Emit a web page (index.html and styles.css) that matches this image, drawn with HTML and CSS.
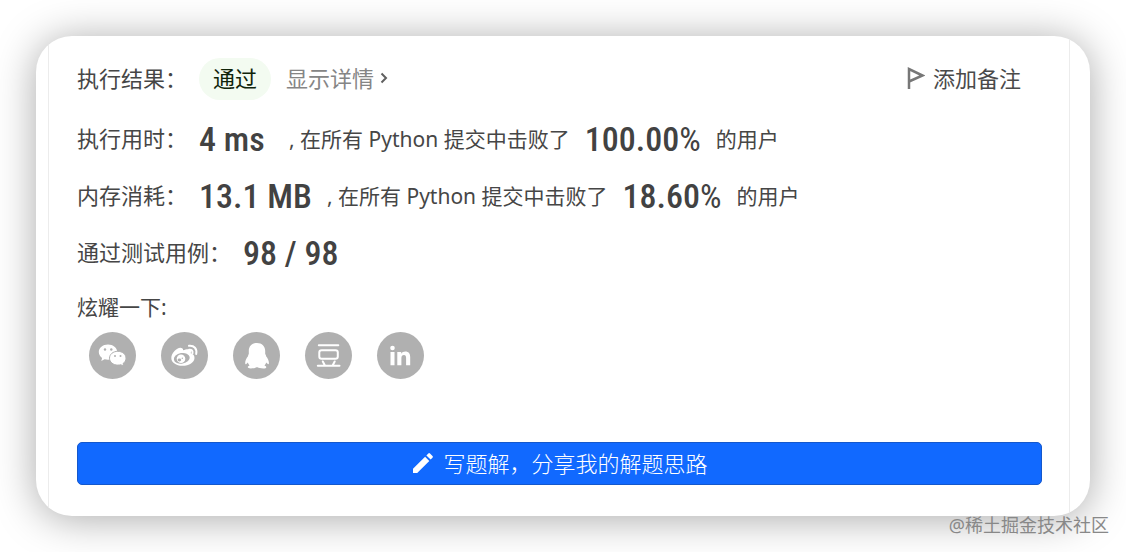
FILE: index.html
```html
<!DOCTYPE html>
<html lang="zh-CN">
<head>
<meta charset="utf-8">
<title>执行结果</title>
<link rel="stylesheet" href="styles.css">
</head>
<body>
<main class="card">
  <div class="panel">
    <header class="row row-head">
      <span class="label">执行结果：</span>
      <span class="status">通过</span>
      <a class="details" href="#details">显示详情
        <svg class="chevron" viewBox="0 0 8 12" aria-hidden="true"><path d="M1.5 1.5 6 6 1.5 10.5"/></svg>
      </a>
      <button class="note" type="button">
        <svg class="flag" viewBox="0 0 18 24" aria-hidden="true"><path d="M2 23V3L15.500 9.500 2 15.500"/></svg>
        添加备注
      </button>
    </header>
    <div class="row">
      <span class="label">执行用时：</span>
      <strong class="value">4 ms</strong>
      <span class="text">, 在所有 Python 提交中击败了</span>
      <strong class="value">100.00<span class="percent">%</span></strong>
      <span class="text">的用户</span>
    </div>
    <div class="row">
      <span class="label">内存消耗：</span>
      <strong class="value">13.1 MB</strong>
      <span class="text">, 在所有 Python 提交中击败了</span>
      <strong class="value">18.60<span class="percent">%</span></strong>
      <span class="text">的用户</span>
    </div>
    <div class="row">
      <span class="label">通过测试用例：</span>
      <strong class="value">98 / 98</strong>
    </div>
    <div class="share">
      <span class="share-title">炫耀一下:</span>
      <div class="icons">
        <a class="social" href="#wechat" aria-label="微信">
          <svg viewBox="0 0 47 47" aria-hidden="true">
            <path class="fill" d="M19 12.500c-5.200 0-9.200 3.300-9.200 7.500 0 2.400 1.300 4.500 3.300 5.900l-.8 3 3.300-1.700c1.100.3 2.200.5 3.400.5 5.100 0 9.200-3.400 9.200-7.700s-4.100-7.500-9.200-7.500Z"/>
            <path class="fill cut" d="M28.800 19.300c-4.700 0-8.300 3-8.300 6.900 0 3.800 3.600 6.900 8.300 6.900 1.100 0 2-.2 3-.4l3 1.600-.8-2.700c1.900-1.300 3-3.200 3-5.400 0-3.900-3.600-6.900-8.200-6.900Z"/>
            <g class="hole"><circle cx="16" cy="17.500" r="1.200"/><circle cx="22.300" cy="17.500" r="1.200"/><circle cx="26" cy="24" r="1"/><circle cx="31.500" cy="24" r="1"/></g>
          </svg>
        </a>
        <a class="social" href="#weibo" aria-label="微博">
          <svg viewBox="0 0 47 47" aria-hidden="true">
            <path class="fill" d="M21.500 16.500c-2-2-5.600-.2-8 2.600-2.200 2.500-3.200 4.700-3.200 6.900 0 4.600 5 7.800 11 7.800 7 0 12.200-3.700 12.200-7.900 0-2.600-1.700-4-3.800-4.600.7-2.300.4-3.300-.8-3.800-1.800-.8-4.300-.2-7 .8.300-.8.300-1.300-.4-1.800Z"/>
            <ellipse class="hole" cx="20.800" cy="26.300" rx="8" ry="5.300" transform="rotate(-10 20.800 26.300)"/>
            <circle class="fill" cx="20" cy="26.800" r="4.300"/>
            <ellipse class="hole" cx="18.400" cy="28" rx="1.800" ry="1.400"/><circle class="hole" cx="21.300" cy="26.300" r=".7"/>
            <path class="wave" d="M28 13.800c5.200-.5 8.300 3 7.200 8.200M28.200 17.700c2.500-.2 3.700 1.200 3.300 3.500"/>
          </svg>
        </a>
        <a class="social" href="#qq" aria-label="QQ">
          <svg viewBox="0 0 47 47" aria-hidden="true">
            <path class="fill" d="M24 11c-5 0-8.200 3.300-8.200 8v3c-.4.600-.8 1.400-.8 2.300-1.700 2.200-3 5-2.800 7 .1 1.600.8 1.400 2.600-.7.3 1.200 1 2.100 1.700 2.900-3 1.300-1.800 2.900 1.300 2.900 2.800 0 4.500-.5 5.700-1.200h1c1.200.7 3 1.200 5.800 1.200 3.200 0 4.200-1.600 1.200-2.900.8-.8 1.500-1.700 1.800-2.900 1.800 2.100 2.500 2.200 2.600.7.200-2-1.100-4.800-2.800-7 0-.9-.4-1.700-.9-2.300v-3c0-4.700-3.200-8-8.200-8Z"/>
          </svg>
        </a>
        <a class="social" href="#douban" aria-label="豆瓣">
          <svg viewBox="0 0 47 47" aria-hidden="true">
            <path class="stroke" d="M13.800 13.200h19.500M12.800 33.800h21.700M17.800 29.500l2 3.800M29.700 29.500l-2 3.800"/>
            <rect class="stroke" x="14.300" y="18.300" width="18.500" height="8.400" rx="2.300"/>
          </svg>
        </a>
        <a class="social" href="#linkedin" aria-label="LinkedIn">
          <svg viewBox="0 0 47 47" aria-hidden="true">
            <circle class="fill" cx="15.500" cy="16" r="2.300"/>
            <path class="fill" d="M13.500 20h4v13.200h-4zM20.300 20h3.900v1.700c.9-1.300 2.300-2.100 4.100-2.100 3.300 0 4.900 2.100 4.900 5.700v7.900h-4.100v-7.100c0-2-.6-3-2.100-3-1.700 0-2.600 1.100-2.600 3v7.100h-4.100z"/>
          </svg>
        </a>
      </div>
    </div>
    <button class="write" type="button">
      <svg class="pencil" viewBox="0 0 24 24" aria-hidden="true"><path d="M2 17.800V22h4.200L18.300 9.900l-4.200-4.200ZM21.500 6.700a1.200 1.200 0 0 0 0-1.700L19 2.500a1.200 1.200 0 0 0-1.700 0l-1.900 1.900 4.200 4.200Z"/></svg>
      写题解，分享我的解题思路
    </button>
  </div>
</main>
<div class="watermark">@稀土掘金技术社区</div>
</body>
</html>
```
FILE: styles.css
```css
* {
  box-sizing: border-box;
}

body {
  margin: 0;
  padding: 36px;
  background: #fff;
  color: #464646;
  font-family: "Noto Sans", "Noto Sans CJK SC", sans-serif;
  font-size: 21px;
  font-weight: 400;
  line-height: 32px;
}

button {
  font: inherit;
  cursor: pointer;
}

a {
  color: inherit;
  text-decoration: none;
}

.card {
  padding: 0 20px 0 12px;
  border-radius: 36px;
  overflow: hidden;
  background: #fff;
  box-shadow: 0 3px 42px rgba(0, 0, 0, 0.34);
}

.panel {
  padding: 21px 27px 31px 28px;
  border: solid #ececec;
  border-width: 0 1px;
}

.row {
  display: flex;
  align-items: center;
  gap: 15px;
  height: 57px;
  white-space: nowrap;
}

.row-head {
  height: 43px;
  margin-bottom: 10px;
}

.label,
.status,
.details,
.note {
  font-size: 22px;
  line-height: 30px;
  padding-bottom: 2px;
}

.label {
  margin-right: -3px;
}

.status {
  padding: 5px 14px 7px;
  border-radius: 22px;
  background: #f3fbf1;
  color: #10240a;
}

.details {
  display: flex;
  align-items: center;
  gap: 6px;
  color: #858585;
}

.chevron {
  width: 8px;
  height: 12px;
  fill: none;
  stroke: #606060;
  stroke-width: 2;
}

.note {
  display: flex;
  align-items: center;
  gap: 8px;
  margin-left: auto;
  padding: 0 21px 2px 0;
  border: 0;
  background: none;
  color: #4a4a4a;
}

.flag {
  width: 18px;
  height: 24px;
  fill: none;
  stroke: #777;
  stroke-width: 2.5;
}

.value {
  min-width: 75px;
  color: #424242;
  font-family: "Roboto Condensed", Roboto, sans-serif;
  font-size: 34px;
  font-weight: 500;
}

.percent {
  font-weight: 400;
}

.share-title {
  display: block;
  margin-top: 10px;
}

.icons {
  display: flex;
  gap: 25px;
  padding: 9px 12px 0;
}

.social,
.social svg {
  display: block;
  width: 47px;
  height: 47px;
}

.social {
  border-radius: 50%;
  background: #b0b0b0;
}

.fill {
  fill: #fff;
}

.cut {
  stroke: #b0b0b0;
  stroke-width: 1;
}

.hole {
  fill: #b0b0b0;
}

.wave,
.stroke {
  fill: none;
  stroke: #fff;
  stroke-width: 2;
  stroke-linecap: round;
}

.write {
  display: flex;
  align-items: center;
  justify-content: center;
  gap: 8px;
  width: 100%;
  height: 43px;
  margin-top: 63px;
  padding: 0 0 2px;
  border: 1px solid #1458cc;
  border-radius: 5px;
  background: #1169ff;
  color: #fff;
  font-size: 22px;
  font-weight: 300;
}

.pencil {
  width: 24px;
  height: 24px;
  fill: #fff;
}

.watermark {
  position: absolute;
  right: 17px;
  bottom: 11px;
  color: #888;
  font-size: 18px;
}
```
